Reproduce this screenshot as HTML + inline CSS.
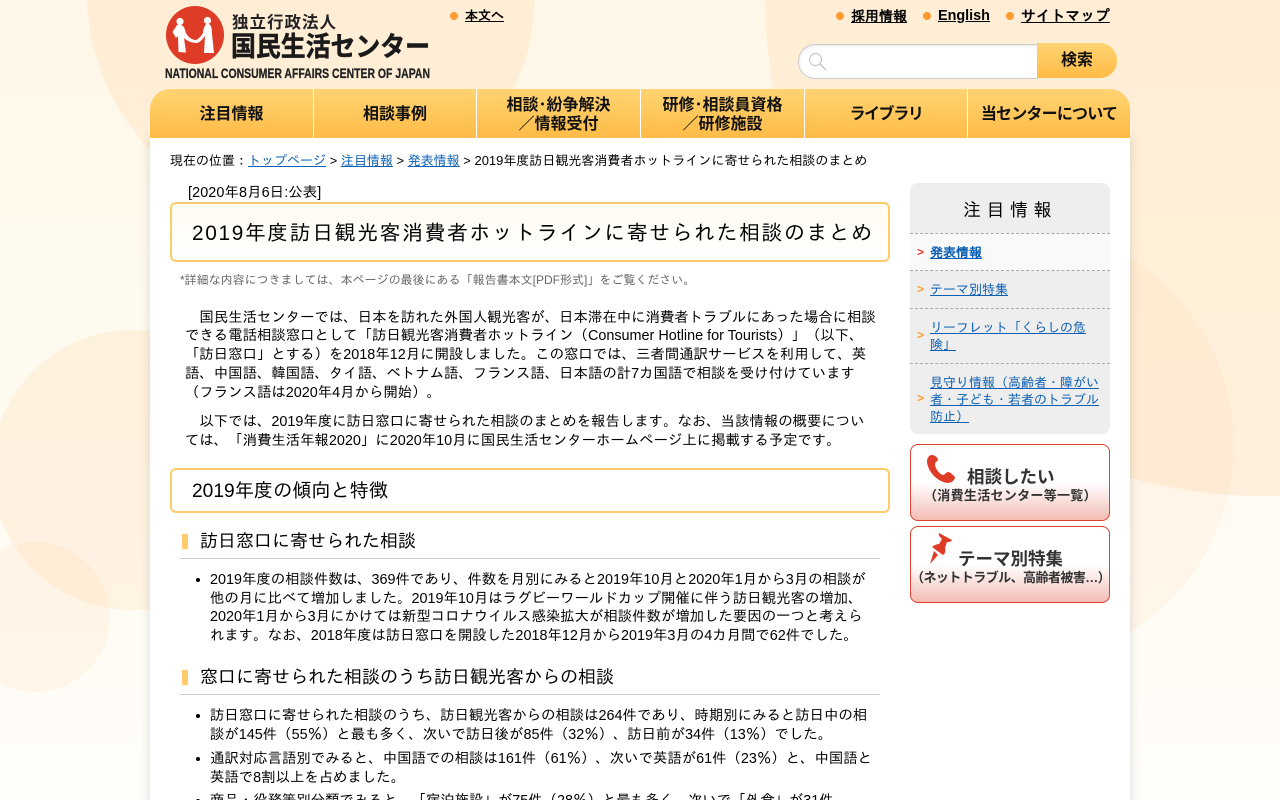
<!DOCTYPE html>
<html lang="ja"><head><meta charset="utf-8"><title>国民生活センター</title>
<style>
html,body{margin:0;padding:0;width:1280px;height:800px;overflow:hidden}
body{position:relative;background:linear-gradient(#fff8e8,#fffdf9);font-family:"Liberation Sans","IPAGothic",sans-serif;color:#000;font-size:14.4px}
.a{position:absolute;white-space:nowrap}
.bg{position:absolute;left:0;top:0}
#wrap{position:absolute;left:150px;top:138px;width:980px;height:700px;background:#fff;box-shadow:0 0 10px rgba(0,0,0,.14)}
#nav{position:absolute;left:150px;top:89px;width:980px;height:49px;border-radius:20px 20px 0 0;background:linear-gradient(#ffd473,#ffbb46);overflow:hidden;font-family:"Liberation Sans","Noto Sans CJK JP",sans-serif}
#nav div{position:absolute;top:0;height:49px;padding-top:2px;display:flex;align-items:center;justify-content:center;text-align:center;font-weight:bold;font-size:16px;line-height:19px;border-right:1px solid #fff;box-sizing:border-box;color:#111}
a{color:#0b5fb4;text-decoration:underline}
.top a{color:#000;font-weight:bold}
.dot{position:absolute;width:8px;height:8px;border-radius:50%;background:#ff9a2e}
.box{position:absolute;left:170px;width:720px;box-sizing:border-box;border:2px solid #ffcb6b;border-radius:6px;background:#fff}
.p{position:absolute;left:185px;line-height:18.72px;white-space:nowrap;font-size:14.4px}
.li{position:absolute;left:210px;line-height:18.72px;white-space:nowrap;font-size:14.4px}
.li:before{content:"";position:absolute;left:-14px;top:7px;width:4px;height:4px;border-radius:50%;background:#000}
.h4{position:absolute;left:180px;width:700px;height:34px;border-bottom:1px solid #ccc;box-sizing:border-box;font-size:18px;line-height:32px;padding-left:20px;white-space:nowrap}
.h4:before{content:"";position:absolute;left:2px;top:9px;width:6px;height:15px;background:#ffcb6b}
#side{position:absolute;left:910px;top:183px;width:200px;height:251px;background:#eee;border-radius:8px;overflow:hidden}
#side .t{position:absolute;left:0;top:0;width:200px;height:50px;line-height:54px;text-align:center;font-size:18px;letter-spacing:5.5px}
#side .r{position:absolute;left:0;width:200px;box-sizing:border-box;border-top:1px dashed #aaa;display:flex;align-items:center;padding-left:20px;font-size:13px;line-height:17px;white-space:nowrap}
#side .r:before{content:">";position:absolute;left:7px;top:50%;margin-top:-9px;line-height:17px;font-size:12px;font-weight:bold;color:#ff9a2e}
#side .r.c{background:#f9f9f9;font-weight:bold}
#side .r.c:before{color:#e04030}
#side a{color:#0b5fb4}
.bn{position:absolute;left:910px;width:200px;height:77px;box-sizing:border-box;border:1px solid #e04030;border-radius:8px;background:linear-gradient(#fff 0,#fff 50%,#f3bdb5 100%)}
.bt{position:absolute;white-space:nowrap;font-weight:bold;color:#333;font-family:"Liberation Sans","Noto Sans CJK JP",sans-serif}
</style></head><body>
<svg class="bg" width="1280" height="800">
<circle cx="311" cy="-6" r="224" fill="#ffc98a" fill-opacity=".2"/>
<circle cx="1263" cy="-2" r="498" fill="#ffc98a" fill-opacity=".2"/>
<circle cx="1014" cy="445" r="220" fill="#ffc98a" fill-opacity=".1"/>
<circle cx="132" cy="470" r="140" fill="#ffc98a" fill-opacity=".17"/>
<circle cx="35" cy="617" r="75" fill="#ffc98a" fill-opacity=".13"/>
</svg>
<div id="wrap"></div>

<svg class="a" style="left:160px;top:0" width="280" height="86" viewBox="160 0 280 86">
<circle cx="195" cy="35" r="29" fill="#de3c27"/>
<circle cx="180" cy="21.500" r="3.600" fill="#fff"/><circle cx="207.500" cy="20.500" r="3.600" fill="#fff"/>
<path fill="#fff" d="M177 25L172.500 32L176 38L178 36L178.500 52L186 52.500L184 38C187 41 192 43 197 43C201 42 203 38 205 36L204 53L214 53L212 34C212 28 211 25 209 24L206 24C204 27 203 30 203 33C201 36 199 39 196 40C192 40 188 37 186 33L184 27C182 25 179 24 177 25Z"/>
<text x="232" y="28" font-size="16.500" font-weight="bold" fill="#222" textLength="104" font-family="Liberation Sans,Noto Sans CJK JP,sans-serif">独立行政法人</text>
<text x="231" y="56" font-size="27" font-weight="bold" fill="#1a1a1a" stroke="#1a1a1a" stroke-width=".5" textLength="199" lengthAdjust="spacingAndGlyphs" font-family="Liberation Sans,Noto Sans CJK JP,sans-serif">国民生活センター</text>
<text x="165" y="78" font-size="13.500" font-weight="bold" fill="#222" stroke="#222" stroke-width=".3" textLength="265" lengthAdjust="spacingAndGlyphs" font-family="Liberation Sans,sans-serif">NATIONAL CONSUMER AFFAIRS CENTER OF JAPAN</text>
</svg>

<div class="top">
<span class="dot" style="left:450px;top:12px"></span><a class="a" style="left:465px;top:8px;font-size:13px;line-height:16px" href="#">本文へ</a>
<span class="dot" style="left:836px;top:12px"></span><a class="a" style="left:851px;top:8px;line-height:17px;font-size:14px" href="#">採用情報</a>
<span class="dot" style="left:923px;top:12px"></span><a class="a" style="left:938px;top:8px;line-height:17px" href="#">English</a>
<span class="dot" style="left:1006px;top:12px"></span><a class="a" style="left:1021px;top:9px;line-height:17px;font-size:14.8px" href="#">サイトマップ</a>
</div>

<div class="a" style="left:798px;top:44px;width:240px;height:35px;box-sizing:border-box;background:#fff;border:1px solid #ccc;border-right:0;border-radius:17px 0 0 17px;box-shadow:inset 0 1px 3px rgba(0,0,0,.1)"></div>
<svg class="a" style="left:806px;top:50px" width="22" height="22"><circle cx="9.500" cy="9.500" r="6" fill="none" stroke="#c4c8c4" stroke-width="1.200"/><path d="M14 14L20 20" stroke="#c4c8c4" stroke-width="1.500"/></svg>
<div class="a" style="left:1037px;top:43px;width:80px;height:35px;border-radius:0 17px 17px 0;background:linear-gradient(#ffd473,#ffbb46);text-align:center;line-height:35px;font-weight:bold;font-size:16px;color:#111;font-family:'Liberation Sans','Noto Sans CJK JP',sans-serif">検索</div>

<div id="nav">
<div style="left:0;width:164px">注目情報</div>
<div style="left:164px;width:163px">相談事例</div>
<div style="left:327px;width:164px">相談･紛争解決<br>／情報受付</div>
<div style="left:491px;width:164px">研修･相談員資格<br>／研修施設</div>
<div style="left:655px;width:163px;letter-spacing:-1.400px">ライブラリ</div>
<div style="left:818px;width:162px;border:0;letter-spacing:-.8px">当センターについて</div>
</div>

<div class="a" style="left:170px;top:152px;font-size:13px;line-height:17px">現在の位置：<a href="#">トップページ</a> &gt; <a href="#">注目情報</a> &gt; <a href="#">発表情報</a> &gt; 2019年度訪日観光客消費者ホットラインに寄せられた相談のまとめ</div>
<div class="a" style="left:188px;top:185px;line-height:17px;letter-spacing:.1px">[2020年8月6日:公表]</div>

<div class="box" style="top:202px;height:60px;background:linear-gradient(#fffbf1,#fff)"></div>
<div class="a" style="left:192px;top:220px;font-size:20.8px;letter-spacing:.08em;line-height:28px">2019年度訪日観光客消費者ホットラインに寄せられた相談のまとめ</div>
<div class="a" style="left:180px;top:272px;font-size:12px;line-height:17px;color:#666">*詳細な内容につきましては、本ページの最後にある「報告書本文[PDF形式]」をご覧ください。</div>

<div class="p" style="top:308.700px">　国民生活センターでは、日本を訪れた外国人観光客が、日本滞在中に消費者トラブルにあった場合に相談<br>できる電話相談窓口として「訪日観光客消費者ホットライン（Consumer Hotline for Tourists）」（以下、<br>「訪日窓口」とする）を2018年12月に開設しました。この窓口では、三者間通訳サービスを利用して、英<br>語、中国語、韓国語、タイ語、ベトナム語、フランス語、日本語の計7カ国語で相談を受け付けています<br>（フランス語は2020年4月から開始）。</div>
<div class="p" style="top:413px">　以下では、2019年度に訪日窓口に寄せられた相談のまとめを報告します。なお、当該情報の概要につい<br>ては、「消費生活年報2020」に2020年10月に国民生活センターホームページ上に掲載する予定です。</div>

<div class="box" style="top:468px;height:45px"></div>
<div class="a" style="left:192px;top:478px;font-size:19.2px;line-height:28px">2019年度の傾向と特徴</div>

<div class="h4" style="top:525px">訪日窓口に寄せられた相談</div>
<div class="li" style="top:571px">2019年度の相談件数は、369件であり、件数を月別にみると2019年10月と2020年1月から3月の相談が<br>他の月に比べて増加しました。2019年10月はラグビーワールドカップ開催に伴う訪日観光客の増加、<br>2020年1月から3月にかけては新型コロナウイルス感染拡大が相談件数が増加した要因の一つと考えら<br>れます。なお、2018年度は訪日窓口を開設した2018年12月から2019年3月の4カ月間で62件でした。</div>

<div class="h4" style="top:661px">窓口に寄せられた相談のうち訪日観光客からの相談</div>
<div class="li" style="top:707px">訪日窓口に寄せられた相談のうち、訪日観光客からの相談は264件であり、時期別にみると訪日中の相<br>談が145件（55％）と最も多く、次いで訪日後が85件（32％）、訪日前が34件（13％）でした。</div>
<div class="li" style="top:750px">通訳対応言語別でみると、中国語での相談は161件（61％）、次いで英語が61件（23％）と、中国語と<br>英語で8割以上を占めました。</div>
<div class="li" style="top:792px">商品・役務等別分類でみると、「宿泊施設」が75件（28％）と最も多く、次いで「外食」が31件</div>

<div id="side">
<div class="t">注目情報</div>
<div class="r c" style="top:50px;height:38px"><a href="#">発表情報</a></div>
<div class="r" style="top:87px;height:38px"><a href="#">テーマ別特集</a></div>
<div class="r" style="top:125px;height:55px"><a href="#">リーフレット「くらしの危<br>険」</a></div>
<div class="r" style="top:180px;height:71px"><a href="#">見守り情報（高齢者・障がい<br>者・子ども・若者のトラブル<br>防止）</a></div>
</div>

<div class="bn" style="top:444px"></div>
<svg class="a" style="left:925px;top:453px" width="32" height="32" viewBox="0 0 32 32"><path fill="#de3c27" d="M7 2C4 2 2 5 2 9C3 18 11 28 22 30C26 30 29 28 30 25C30 23 25 19 23 19C21 19 20 22 18 22C14 21 10 15 10 11C10 9 12 9 13 7C13 5 10 2 7 2Z"/></svg>
<div class="bt" style="left:967px;top:466px;font-size:17.5px;line-height:22px">相談したい</div>
<div class="bt" style="left:924px;top:487px;font-size:13px;line-height:17px;letter-spacing:.3px">（消費生活センター等一覧）</div>

<div class="bn" style="top:526px"></div>
<svg class="a" style="left:925px;top:531px" width="30" height="36" viewBox="0 0 30 36"><path fill="#de3c27" d="M14 2L27 9C26 11 24 11 22 11L20 17C21 20 20 23 18 24L7 16C9 14 12 13 14 13L17 8C15 6 13 4 14 2ZM9 20L13 24L5 33Z"/></svg>
<div class="bt" style="left:958px;top:548px;font-size:17.5px;line-height:22px">テーマ別特集</div>
<div class="bt" style="left:911px;top:569px;font-size:13px;line-height:17px;letter-spacing:-.55px">（ネットトラブル、高齢者被害…）</div>
</body></html>
